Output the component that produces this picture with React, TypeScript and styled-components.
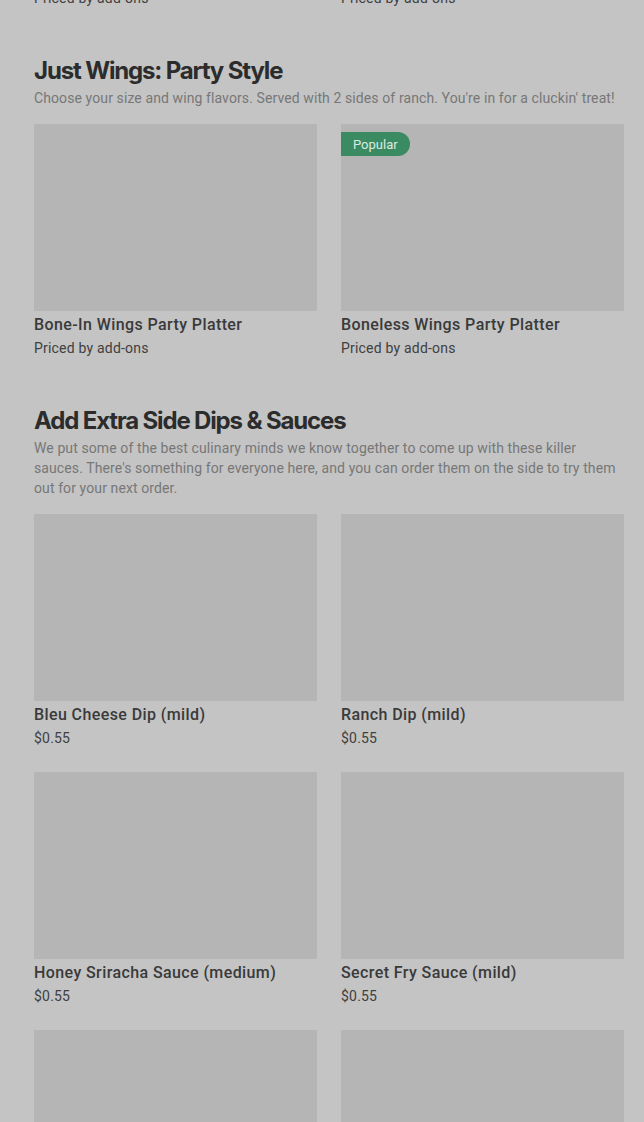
import { FC } from 'react';
import styled, { createGlobalStyle } from 'styled-components';

const GlobalStyle = createGlobalStyle`
    html, body {
        margin: 0;
        padding: 0;
        background: #c4c4c4;
    }
    body {
        font-family: Roboto, "Noto Sans", "Liberation Sans", sans-serif;
        overflow: hidden;
    }
`;

const Page = styled.div`
    padding: 0 20px 0 34px;
    margin-top: -12px;
`;

const Section = styled.section`
    padding-top: 47px;
`;

const SectionTitle = styled.h2`
    margin: 0;
    font-family: Inter, Roboto, sans-serif;
    font-size: 24px;
    line-height: 32px;
    font-weight: 700;
    letter-spacing: -1.15px;
    color: #2c2c2c;
`;

const SectionDesc = styled.p`
    margin: 1px 0 16px;
    font-size: 14px;
    line-height: 20px;
    letter-spacing: 0.1px;
    color: #777777;
`;

const Grid = styled.div`
    display: grid;
    grid-template-columns: 283px 283px;
    gap: 24px;
`;

const Card = styled.div`
    display: flex;
    flex-direction: column;
`;

const Thumb = styled.div`
    position: relative;
    height: 187px;
    background: #b5b5b5;
`;

const Badge = styled.span`
    position: absolute;
    top: 8px;
    left: 0;
    height: 24px;
    padding: 0 12px;
    display: flex;
    align-items: center;
    background: #3a8a62;
    color: #dcebe2;
    font-size: 13px;
    border-radius: 0 12px 12px 0;
`;

const ItemName = styled.div`
    margin-top: 4px;
    font-size: 16px;
    line-height: 20px;
    font-weight: 500;
    letter-spacing: 0.4px;
    color: #3a3a3a;
`;

const ItemPrice = styled.div<{ $flush?: boolean }>`
    margin-top: ${({ $flush }) => ($flush ? '0' : '3px')};
    font-size: 14px;
    line-height: 20px;
    letter-spacing: 0.2px;
    color: #404040;
`;

const TailRow = styled.div`
    display: grid;
    grid-template-columns: 283px 283px;
    column-gap: 24px;
`;

interface IItem {
  name: string;
  price: string;
  popular?: boolean;
}

const wings: IItem[] = [
  { name: 'Bone-In Wings Party Platter', price: 'Priced by add-ons' },
  { name: 'Boneless Wings Party Platter', price: 'Priced by add-ons', popular: true },
];

const sauces: IItem[] = [
  { name: 'Bleu Cheese Dip (mild)', price: '$0.55' },
  { name: 'Ranch Dip (mild)', price: '$0.55' },
  { name: 'Honey Sriracha Sauce (medium)', price: '$0.55' },
  { name: 'Secret Fry Sauce (mild)', price: '$0.55' },
  { name: 'Buffalo Sauce (hot)', price: '$0.55' },
  { name: 'Garlic Parmesan Sauce (mild)', price: '$0.55' },
];

const ItemCard: FC<{ item: IItem }> = ({ item }) => (
  <Card>
    <Thumb>{item.popular && <Badge>Popular</Badge>}</Thumb>
    <ItemName>{item.name}</ItemName>
    <ItemPrice>{item.price}</ItemPrice>
  </Card>
);

export default function App() {
  return (
    <>
      <GlobalStyle />
      <Page>
        <TailRow>
          <ItemPrice $flush>Priced by add-ons</ItemPrice>
          <ItemPrice $flush>Priced by add-ons</ItemPrice>
        </TailRow>
        <Section>
          <SectionTitle>Just Wings: Party Style</SectionTitle>
          <SectionDesc>
            Choose your size and wing flavors. Served with 2 sides of ranch. You're in for a cluckin' treat!
          </SectionDesc>
          <Grid>
            {wings.map((item) => (
              <ItemCard key={item.name} item={item} />
            ))}
          </Grid>
        </Section>
        <Section>
          <SectionTitle>Add Extra Side Dips &amp; Sauces</SectionTitle>
          <SectionDesc>
            We put some of the best culinary minds we know together to come up with these killer sauces. There's
            something for everyone here, and you can order them on the side to try them out for your next order.
          </SectionDesc>
          <Grid>
            {sauces.map((item) => (
              <ItemCard key={item.name} item={item} />
            ))}
          </Grid>
        </Section>
      </Page>
    </>
  );
}
